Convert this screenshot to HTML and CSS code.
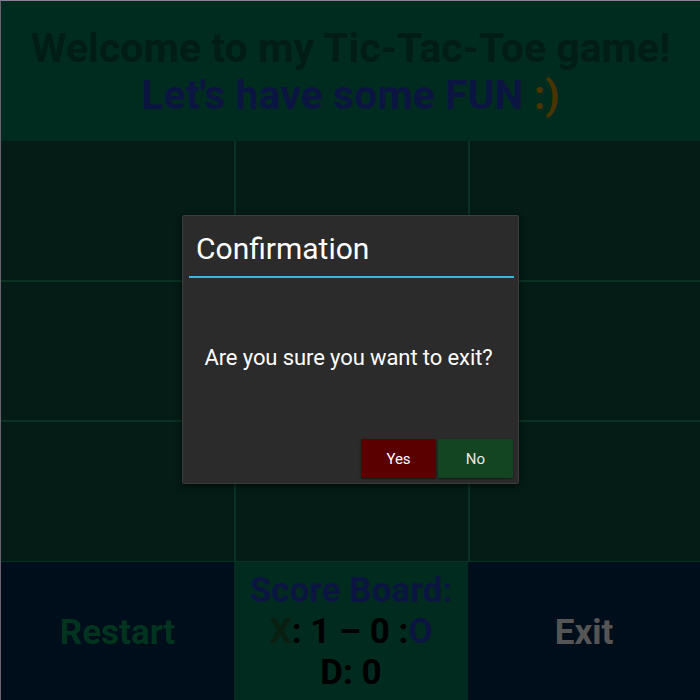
FILE: index.html
```html
<!DOCTYPE html>
<html>
<head>
<meta charset="utf-8">
<link rel="stylesheet" href="styles.css">
</head>
<body>
<div class="app">
  <header class="head">
    <div class="welcome">Welcome to my Tic-Tac-Toe game!</div>
    <div class="fun">Let's have some FUN <span class="smile">:)</span></div>
  </header>
  <div class="grid">
    <div class="cell"></div><div class="cell"></div><div class="cell"></div>
    <div class="cell"></div><div class="cell"></div><div class="cell"></div>
    <div class="cell"></div><div class="cell"></div><div class="cell"></div>
  </div>
  <div class="bottom">
    <div class="btn restart">Restart</div>
    <div class="score">
      <div class="score-title">Score Board:</div>
      <div class="score-line"><span class="sx">X</span>: 1 – 0 :<span class="so">O</span></div>
      <div class="score-line">D: 0</div>
    </div>
    <div class="btn exit">Exit</div>
  </div>
  <div class="dialog">
    <div class="dlg-title">Confirmation</div>
    <div class="dlg-sep"></div>
    <div class="dlg-msg">Are you sure you want to exit?</div>
    <div class="dlg-actions">
      <div class="dlg-btn yes">Yes</div>
      <div class="dlg-btn no">No</div>
    </div>
  </div>
</div>
</body>
</html>
```
FILE: styles.css
```css
html, body {
  margin: 0;
  padding: 0;
  background: #000d1a;
}
.app {
  position: relative;
  width: 700px;
  height: 700px;
  box-sizing: border-box;
  border-top: 1px solid #8c7f9c;
  border-left: 1px solid #6b6470;
  display: flex;
  flex-direction: column;
  font-family: Roboto, "Liberation Sans", sans-serif;
  overflow: hidden;
}
.head {
  height: 140px;
  background: #002c20;
  display: flex;
  flex-direction: column;
  align-items: center;
  justify-content: center;
  font-weight: 700;
  font-size: 41px;
  line-height: 47px;
  padding-top: 2px;
  box-sizing: border-box;
}
.welcome { color: #021d16; }
.fun { color: #0c1541; }
.smile { color: #4a3500; }
.grid {
  height: 420px;
  display: grid;
  grid-template-columns: 233px 232px 1fr;
  grid-template-rows: 139px 138px 1fr;
  gap: 2px;
  background: #0a3223;
}
.cell { background: #041c15; }
.bottom {
  flex: 1;
  display: grid;
  grid-template-columns: 233px 234px 1fr;
  border-top: 1px solid #0a3223;
}
.btn {
  background: #000d1a;
  display: flex;
  align-items: center;
  justify-content: center;
  font-weight: 700;
  font-size: 35px;
  padding-top: 2px;
}
.restart { color: #00341f; }
.exit { color: #555555; }
.score {
  background: #012b1e;
  display: flex;
  flex-direction: column;
  align-items: center;
  justify-content: center;
  font-weight: 700;
  font-size: 35px;
  line-height: 41px;
  color: #000000;
}
.score-title { color: #0c1541; }
.sx { color: #0a1f10; }
.so { color: #0c1541; }
.dialog {
  position: absolute;
  left: 181px;
  top: 214px;
  width: 337px;
  height: 269px;
  background: #2b2b2b;
  border: 1px solid #3c3c3c;
  border-radius: 2px;
  box-shadow: 0 2px 6px rgba(0,0,0,0.6);
  display: flex;
  flex-direction: column;
  box-sizing: border-box;
  padding: 0 4px 5px 6px;
}
.dlg-title {
  color: #ffffff;
  font-size: 30px;
  padding: 16px 0 0 7px;
  height: 44px;
  line-height: 34px;
}
.dlg-sep {
  height: 2px;
  background: #33b5e5;
}
.dlg-msg {
  flex: 1;
  color: #ffffff;
  font-size: 22px;
  letter-spacing: -0.1px;
  display: flex;
  align-items: center;
  justify-content: center;
  padding: 0 6px 2px 0;
}
.dlg-actions {
  display: flex;
  justify-content: flex-end;
  gap: 2px;
  padding-right: 1px;
}
.dlg-btn {
  width: 75px;
  height: 39px;
  display: flex;
  align-items: center;
  justify-content: center;
  color: #ffffff;
  font-size: 15px;
  border-radius: 1px;
  box-shadow: 0 1px 2px rgba(0,0,0,0.5);
}
.yes { background: #5b0000; }
.no { background: #134523; color: #e8e8e8; }
```
